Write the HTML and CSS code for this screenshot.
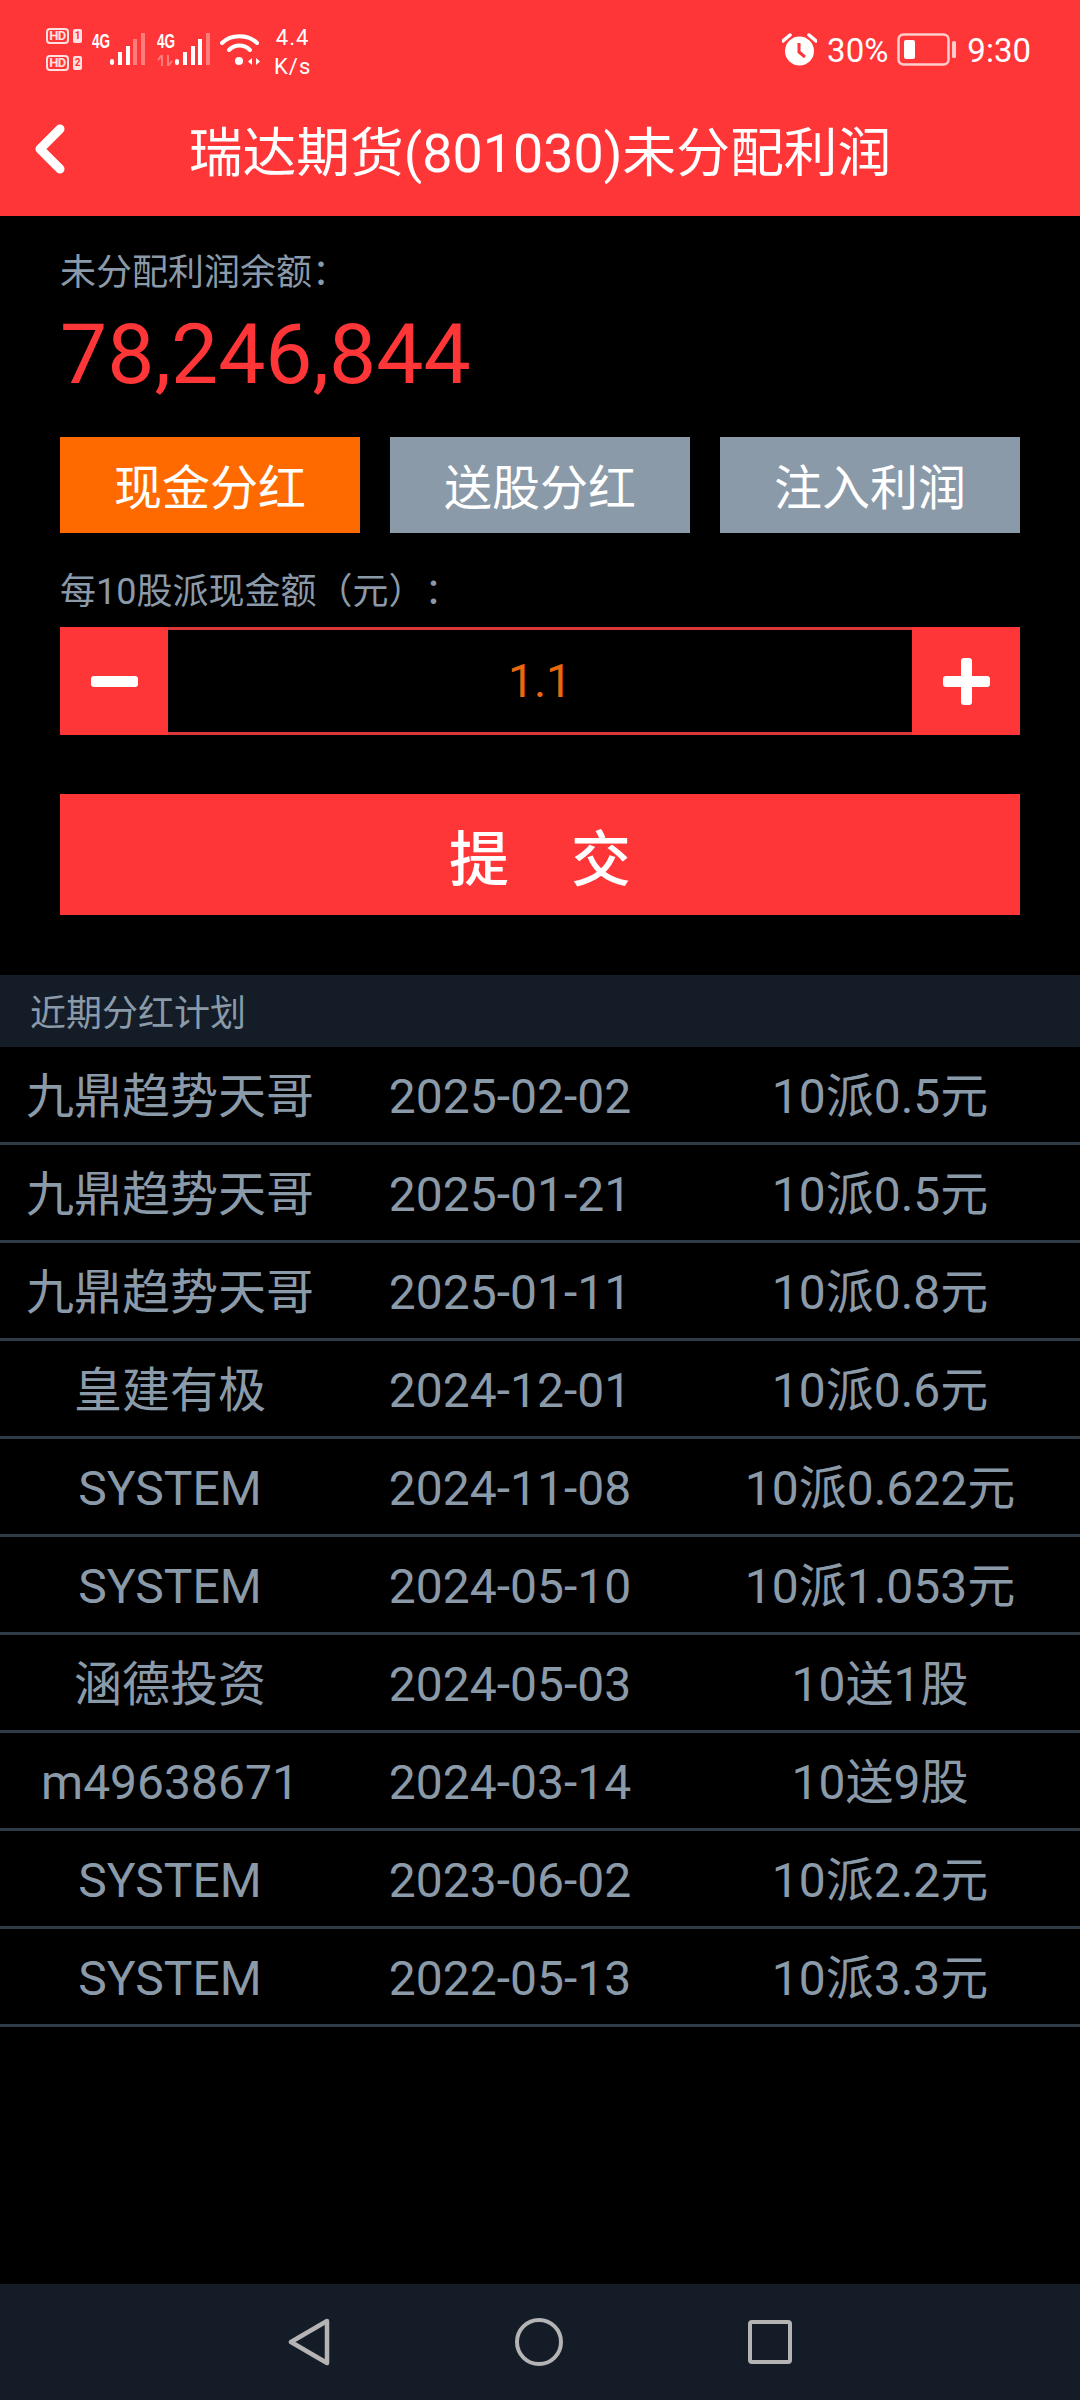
FILE: index.html
```html
<!DOCTYPE html>
<html lang="zh-CN">

<head>
  <meta charset="UTF-8" />
  <title>瑞达期货(801030)未分配利润</title>
  <meta name="viewport" content="width=device-width, initial-scale=1.0" />
  <link rel="stylesheet" href="styles.css">
</head>

<body>
  <div class="page">
    <header class="top">
      <!-- status bar -->
      <div class="status">
        <div class="status-left">
          <div class="hd-col">
            <div class="hd-line"><span class="hd">HD</span><span class="sim">1</span></div>
            <div class="hd-line"><span class="hd">HD</span><span class="sim">2</span></div>
          </div>
          <div class="net net-first">
            <span class="net-label">4G</span>
            <svg class="bars" width="35" height="33" viewBox="0 0 35 33">
              <rect x="0" y="26" width="4" height="6" rx="2" fill="#fff" />
              <rect x="8" y="19" width="4" height="13" fill="#fff" />
              <rect x="16" y="13" width="4" height="19" fill="#fff" />
              <rect x="23" y="6" width="4" height="26" fill="#fff" opacity=".35" />
              <rect x="31" y="0" width="4" height="32" fill="#fff" opacity=".35" />
            </svg>
          </div>
          <div class="net net-second">
            <div class="net-stack">
              <span class="net-label">4G</span>
              <svg width="16" height="11" viewBox="0 0 16 11">
                <path d="M5 0v11M5 0L1 5M11 0v11M11 11l4-5" stroke="#fff" stroke-width="2" fill="none" opacity=".35" />
              </svg>
            </div>
            <svg class="bars" width="35" height="33" viewBox="0 0 35 33">
              <rect x="0" y="26" width="4" height="6" rx="2" fill="#fff" />
              <rect x="8" y="19" width="4" height="13" fill="#fff" />
              <rect x="16" y="13" width="4" height="19" fill="#fff" />
              <rect x="23" y="6" width="4" height="26" fill="#fff" />
              <rect x="31" y="0" width="4" height="32" fill="#fff" opacity=".35" />
            </svg>
          </div>
          <svg class="wifi" width="42" height="33" viewBox="0 0 42 33">
            <path d="M2 10C11 1 28 1 37 10" stroke="#fff" stroke-width="4" fill="none" stroke-linecap="round" />
            <path d="M9 17C15 11 24 11 30 17" stroke="#fff" stroke-width="4" fill="none" stroke-linecap="round" />
            <circle cx="19" cy="28" r="4" fill="#fff" />
            <path d="M28 28.500l4-3.500v7zM40 28.500l-4-3.500v7z" fill="#fff" />
          </svg>
          <div class="speed"><span>4.4</span><span>K/s</span></div>
        </div>
        <div class="status-right">
          <svg class="alarm" width="35" height="33" viewBox="0 0 35 33">
            <circle cx="17.500" cy="18" r="14.500" fill="#fff" />
            <path d="M17 10v9l6 5" stroke="#ff3638" stroke-width="3" fill="none" />
            <path d="M1 8L8 2M34 8l-7-6" stroke="#fff" stroke-width="3.500" stroke-linecap="round" />
          </svg>
          <span class="pct">30%</span>
          <svg class="battery" width="59" height="33" viewBox="0 0 59 33">
            <rect x="1.500" y="1.500" width="50" height="30" rx="5" fill="none" stroke="#fff" stroke-opacity=".75" stroke-width="2.500" />
            <rect x="7" y="7" width="11" height="19" rx="2" fill="#fff" />
            <rect x="55" y="8" width="4" height="17" rx="1.500" fill="#fff" opacity=".75" />
          </svg>
          <span class="clock">9:30</span>
        </div>
      </div>
      <!-- title bar -->
      <div class="titlebar">
        <svg class="back" width="32" height="50" viewBox="0 0 32 50">
          <path d="M27 5L7 25l20 20" stroke="#fff" stroke-width="9" fill="none" stroke-linecap="round" stroke-linejoin="round" />
        </svg>
        <h1>瑞达期货(801030)未分配利润</h1>
      </div>
    </header>

    <main class="main">
      <section class="form">
        <div class="balance-label">未分配利润余额：</div>
        <div class="balance">78,246,844</div>

        <div class="tabs">
          <button class="tab active">现金分红</button>
          <button class="tab">送股分红</button>
          <button class="tab">注入利润</button>
        </div>

        <div class="amount-label">每10股派现金额（元）：</div>
        <div class="stepper">
          <div class="step"><span class="bar"></span></div>
          <div class="step-value">1.1</div>
          <div class="step"><span class="bar"></span><span class="bar bar-v"></span></div>
        </div>

        <button class="submit">提 交</button>
      </section>

      <div class="plan-head">近期分红计划</div>
      <div class="plan">
        <div class="row"><span>九鼎趋势天哥</span><span>2025-02-02</span><span>10派0.5元</span></div>
        <div class="row"><span>九鼎趋势天哥</span><span>2025-01-21</span><span>10派0.5元</span></div>
        <div class="row"><span>九鼎趋势天哥</span><span>2025-01-11</span><span>10派0.8元</span></div>
        <div class="row"><span>皇建有极</span><span>2024-12-01</span><span>10派0.6元</span></div>
        <div class="row"><span>SYSTEM</span><span>2024-11-08</span><span>10派0.622元</span></div>
        <div class="row"><span>SYSTEM</span><span>2024-05-10</span><span>10派1.053元</span></div>
        <div class="row"><span>涵德投资</span><span>2024-05-03</span><span>10送1股</span></div>
        <div class="row"><span>m49638671</span><span>2024-03-14</span><span>10送9股</span></div>
        <div class="row"><span>SYSTEM</span><span>2023-06-02</span><span>10派2.2元</span></div>
        <div class="row"><span>SYSTEM</span><span>2022-05-13</span><span>10派3.3元</span></div>
      </div>
    </main>

    <!-- system navigation -->
    <nav class="navbar">
      <svg width="42" height="48" viewBox="0 0 42 48">
        <path d="M39 3L3 24l36 21z" fill="none" stroke="#b4b4b4" stroke-width="4.500" stroke-linejoin="round" />
      </svg>
      <svg width="48" height="48" viewBox="0 0 48 48">
        <circle cx="24" cy="24" r="22" fill="none" stroke="#b4b4b4" stroke-width="4" />
      </svg>
      <svg width="44" height="44" viewBox="0 0 44 44">
        <rect x="2" y="2" width="40" height="40" rx="2" fill="none" stroke="#b4b4b4" stroke-width="4" />
      </svg>
    </nav>
  </div>
</body>

</html>
```

FILE: styles.css
```css
* {
  box-sizing: border-box;
}

body {
  margin: 0;
  background: #000;
  font-family: Roboto, "Noto Sans CJK SC", sans-serif;
  text-spacing-trim: space-all;
}

.page {
  display: flex;
  flex-direction: column;
  width: 1080px;
  height: 2400px;
}

.top {
  height: 216px;
  background: #ff3638;
  color: #fff;
}

/* status bar */
.status {
  display: flex;
  justify-content: space-between;
  height: 96px;
  padding: 28px 49px 0 46px;
}

.status-left,
.status-right {
  display: flex;
  align-items: flex-start;
}

.hd-col {
  display: flex;
  flex-direction: column;
  gap: 11px;
}

.hd-line {
  display: flex;
  align-items: center;
  gap: 4px;
  height: 16px;
  opacity: .85;
}

.hd {
  width: 23px;
  height: 16px;
  border: 2px solid #fff;
  border-radius: 4px;
  font-size: 13px;
  font-weight: 700;
  letter-spacing: -.5px;
  line-height: 12px;
  text-align: center;
}

.sim {
  width: 9px;
  height: 14px;
  background: #fff;
  border-radius: 2px;
  color: #ff3638;
  font-size: 10px;
  font-weight: 700;
  line-height: 14px;
  text-align: center;
}

.net {
  display: flex;
  align-items: flex-start;
  padding-top: 5px;
}

.net-first {
  margin-left: 10px;
}

.net-second {
  margin-left: 12px;
}

.net-stack {
  display: flex;
  flex-direction: column;
  gap: 5px;
}

.net-label {
  display: block;
  width: 18px;
  height: 17px;
  font-family: "Liberation Sans", sans-serif;
  font-size: 20px;
  font-weight: 700;
  line-height: 17px;
  transform: scaleX(.68);
  transform-origin: left;
  white-space: nowrap;
}

.wifi {
  margin: 5px 0 0 10px;
}

.speed {
  display: flex;
  flex-direction: column;
  align-items: center;
  gap: 5px;
  margin: -2px 0 0 12px;
  font-size: 22px;
  line-height: 24px;
  letter-spacing: 1px;
}

.status-right {
  padding-top: 5px;
}

.alarm {
  margin-right: 10px;
}

.pct,
.clock {
  font-size: 33px;
  line-height: 36px;
}

.pct {
  margin-right: 9px;
}

.clock {
  margin-left: 11px;
}

/* title bar */
.titlebar {
  position: relative;
  height: 120px;
  padding-top: 20px;
}

.titlebar h1 {
  margin: 0;
  font-size: 53.800px;
  font-weight: 400;
  line-height: 76px;
  text-align: center;
}

.back {
  position: absolute;
  left: 33px;
  top: 28px;
}

.main {
  flex: 1;
}

/* dividend form */
.form {
  display: flex;
  flex-direction: column;
  padding: 37px 60px 0;
}

.balance-label,
.amount-label {
  color: #8b9aa9;
  font-size: 36px;
  line-height: 40px;
}

.balance {
  margin-top: 12px;
  color: #ff3638;
  font-size: 84px;
  line-height: 100px;
}

.tabs {
  display: flex;
  gap: 30px;
  margin-top: 32px;
}

.tab {
  flex: 1;
  height: 96px;
  padding: 0 0 2px;
  border: 0;
  background: #8b9aa9;
  color: #fff;
  font-family: inherit;
  font-size: 48px;
}

.tab.active {
  background: #ff6a00;
}

.amount-label {
  margin-top: 39px;
}

.stepper {
  display: flex;
  height: 108px;
  margin-top: 15px;
}

.step {
  position: relative;
  display: flex;
  flex: none;
  align-items: center;
  justify-content: center;
  width: 108px;
  background: #ff3638;
}

.bar {
  width: 47px;
  height: 11px;
  background: #fff;
  border-radius: 3px;
}

.bar-v {
  position: absolute;
  width: 11px;
  height: 47px;
}

.step-value {
  flex: 1;
  border-top: 3px solid #d9383a;
  border-bottom: 3px solid #d9383a;
  color: #e8690f;
  font-size: 46px;
  line-height: 102px;
  text-align: center;
}

.submit {
  height: 121px;
  margin-top: 59px;
  padding: 0;
  border: 0;
  background: #ff3638;
  color: #fff;
  font-family: inherit;
  font-size: 60px;
  font-weight: 500;
  word-spacing: 47px;
}

/* plan list */
.plan-head {
  height: 72px;
  margin-top: 60px;
  padding: 6px 0 0 30px;
  background: #141d27;
  color: #8b9aa9;
  font-size: 36px;
  line-height: 66px;
}

.row {
  display: grid;
  grid-template-columns: 340px 340px 400px;
  height: 98px;
  border-bottom: 3px solid #2f3b47;
  color: #8b9aa9;
  font-size: 48px;
  line-height: 99px;
  text-align: center;
}

.navbar {
  display: flex;
  align-items: center;
  gap: 185px;
  height: 116px;
  padding-left: 288px;
  background: #141d27;
}
```
